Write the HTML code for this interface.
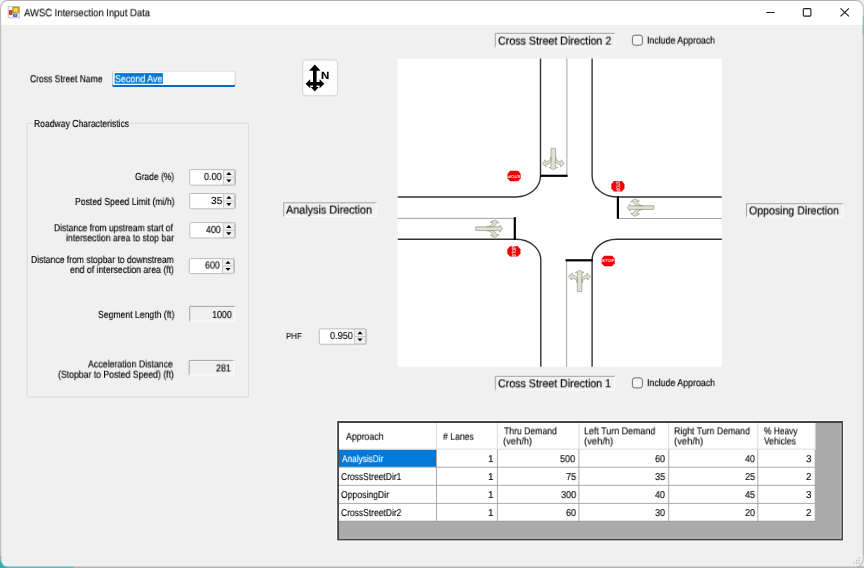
<!DOCTYPE html>
<html lang="en">
<head>
<meta charset="utf-8">
<title>AWSC Intersection Input Data</title>
<style>
html,body{margin:0;padding:0;}
body{width:864px;height:568px;overflow:hidden;position:relative;background:#ececec;font-family:"Liberation Sans",sans-serif;}
.abs{position:absolute;box-sizing:border-box;}
.t{position:absolute;white-space:pre;transform-origin:0 0;color:#000;will-change:transform;text-rendering:geometricPrecision;-webkit-text-stroke:0.15px;}
</style>
</head>
<body>
<!-- window frame -->
<svg class="abs" style="left:0;top:0" width="864" height="568" viewBox="0 0 864 568">
  <rect x="0" y="0" width="864" height="568" fill="#ececec"/>
  <rect x="0" y="556" width="3" height="12" fill="#27b4b4"/>
  <rect x="0" y="566" width="74" height="2" fill="#27b4b4"/>
  <rect x="74" y="566.3" width="790" height="1.7" fill="#b4b4b4"/>
  <rect x="862" y="16" width="2" height="19" fill="#3bbcc2"/>
  <rect x="862.6" y="35" width="1.4" height="520" fill="#c4c4c4"/>
  <clipPath id="wclip"><rect x="1.3" y="0.9" width="861.3" height="565.6" rx="7.2"/></clipPath>
  <rect x="0.75" y="0.35" width="862.4" height="566.7" rx="7.7" fill="none" stroke="#b2b2b2" stroke-width="1.1"/>
  <g clip-path="url(#wclip)">
    <rect x="0" y="0" width="864" height="568" fill="#f0f0f0"/>
    <rect x="0" y="0" width="864" height="24.9" fill="#fff"/>
  </g>
</svg>

<!-- title bar icon + window buttons -->
<svg class="abs" style="left:0;top:0" width="864" height="30" viewBox="0 0 864 30">
  <rect x="8.1" y="6.5" width="11.4" height="11.4" fill="#e9e9e9" stroke="#c2c2c2" stroke-width="0.8"/>
  <rect x="9" y="7.4" width="3.2" height="2.3" fill="#fbffff"/>
  <rect x="9" y="15.2" width="3.2" height="1.9" fill="#fbfbfb"/>
  <rect x="17.6" y="13.6" width="1.3" height="3.5" fill="#f6f6f6"/>
  <rect x="12.9" y="7.2" width="5.9" height="5.6" fill="#e3b21f" stroke="#b78e14" stroke-width="0.9"/>
  <rect x="14.1" y="8.3" width="3.5" height="3.4" fill="#ffd95a"/>
  <rect x="8.9" y="10.2" width="3.5" height="4.6" rx="0.5" fill="#b9281a"/>
  <rect x="10.1" y="11.9" width="1.1" height="1.2" fill="#f2b0a8"/>
  <rect x="13" y="13.8" width="4.3" height="3.2" rx="0.4" fill="#3b79d9"/>
  <rect x="14.2" y="14.6" width="1.9" height="1" fill="#8fb6ef"/>
  <path d="M766.2 12.5H774.6" stroke="#1f1f1f" stroke-width="1.05" fill="none"/>
  <rect x="803.3" y="8.6" width="7.6" height="7.5" rx="1" fill="none" stroke="#1f1f1f" stroke-width="1.1"/>
  <path d="M840.5 8.3L848.9 16.4M848.9 8.3L840.5 16.4" stroke="#1f1f1f" stroke-width="1.1" fill="none"/>
</svg>

<!-- static boxes drawn in SVG for sub-pixel accuracy -->
<svg class="abs" style="left:0;top:0" width="864" height="568" viewBox="0 0 864 568">
  <defs>
    <g id="spbtn">
      <!-- spinner buttons block: origin = top-left of button block, 11.2 x 15.6 -->
      <rect x="0" y="0" width="11.2" height="15.6" fill="#efefef" stroke="#c4c4c4" stroke-width="0.9"/>
      <path d="M0 7.8H11.2" stroke="#c4c4c4" stroke-width="0.9"/>
      <path d="M5.6 2.3L8.2 5.3H3Z" fill="#000"/>
      <path d="M5.6 12.9L8.2 9.9H3Z" fill="#000"/>
    </g>
  </defs>
  <!-- Cross street name textbox -->
  <rect x="112.3" y="71" width="122.8" height="15.9" rx="1.5" fill="#0a6cc5"/>
  <rect x="112.3" y="71" width="122.8" height="14" rx="1.2" fill="#e4e4e4"/>
  <rect x="113.1" y="71.8" width="121.2" height="13.2" fill="#fff"/>
  <rect x="114.7" y="73.1" width="48.2" height="10.6" fill="#0078d7"/>
  <!-- group box -->
  <rect x="27.2" y="123.3" width="221.2" height="273.8" fill="none" stroke="#dadada" stroke-width="1"/>
  <rect x="32" y="118" width="99" height="10" fill="#f0f0f0"/>
  <!-- spinners -->
  <g fill="#fff" stroke="#b9bec6" stroke-width="1">
    <rect x="189.7" y="169.6" width="45.8" height="15.6" rx="1.3"/>
    <rect x="189.7" y="193.5" width="45.8" height="15.3" rx="1.3"/>
    <rect x="189.8" y="222.6" width="45.6" height="15.4" rx="1.3"/>
    <rect x="189.3" y="258.6" width="45.2" height="15" rx="1.3"/>
    <rect x="319.3" y="328.9" width="47" height="15.3" rx="1.3"/>
  </g>
  <use href="#spbtn" transform="translate(223.3 169.9) scale(1 0.96)"/>
  <use href="#spbtn" transform="translate(223.3 193.8) scale(1 0.94)"/>
  <use href="#spbtn" transform="translate(223.2 222.9) scale(1 0.95)"/>
  <use href="#spbtn" transform="translate(222.4 258.9) scale(1 0.92)"/>
  <use href="#spbtn" transform="translate(354.4 329.2) scale(1 0.94)"/>
  <!-- sunken boxes: dark top/left, white bottom/right -->
  <g id="sunkall">
    <path d="M189.7 321.5V306.4H235.2" fill="none" stroke="#a4a4a4" stroke-width="1"/><path d="M189.7 321.0H234.7V306.4" fill="none" stroke="#fdfdfd" stroke-width="1"/>
    <path d="M189.2 375.4V360.4H234.3" fill="none" stroke="#a4a4a4" stroke-width="1"/><path d="M189.2 374.9H233.8V360.4" fill="none" stroke="#fdfdfd" stroke-width="1"/>
    <path d="M283.7 216.9V202.8H376.5" fill="none" stroke="#a4a4a4" stroke-width="1"/><path d="M283.7 216.4H376.0V202.8" fill="none" stroke="#fdfdfd" stroke-width="1"/>
    <path d="M495.3 47.4V33.3H615.3" fill="none" stroke="#a4a4a4" stroke-width="1"/><path d="M495.3 46.9H614.8V33.3" fill="none" stroke="#fdfdfd" stroke-width="1"/>
    <path d="M495.3 390.4V376.3H615.3" fill="none" stroke="#a4a4a4" stroke-width="1"/><path d="M495.3 389.9H614.8V376.3" fill="none" stroke="#fdfdfd" stroke-width="1"/>
    <path d="M746.5 217.5V203.7H843.2" fill="none" stroke="#a4a4a4" stroke-width="1"/><path d="M746.5 217.0H842.7V203.7" fill="none" stroke="#fdfdfd" stroke-width="1"/>
  </g>
  <!-- N button -->
  <rect x="302.7" y="59.9" width="34.9" height="35.9" rx="3" fill="#fdfdfd" stroke="#d2d2d2" stroke-width="1"/>
  <!-- checkboxes -->
  <rect x="632.4" y="35.2" width="10" height="10" rx="2.4" fill="#f6f6f6" stroke="#6b6b6b" stroke-width="1"/>
  <rect x="632.4" y="377.9" width="10" height="10" rx="2.4" fill="#f6f6f6" stroke="#6b6b6b" stroke-width="1"/>
</svg>

<!-- intersection picture -->
<svg class="abs" style="left:0;top:0" width="864" height="568" viewBox="0 0 864 568">
  <defs>
    <g id="arw">
      <!-- canonical arrow pointing +y (down); tail at y=0 tip at y=21.2; half-width 10.7 -->
      <path d="M-2.3 0H2.3V19.1H4.3L0 21.2L-4.3 19.1H-2.3Z
               M-2.3 8.6C-2.9 11.8 -4.8 13.3 -7.7 13.6L-8.1 11.5L-10.9 15.4L-7.2 18.5L-7.4 16.5C-4.9 16.2 -3.2 15.2 -2.3 13.2Z
               M2.3 8.6C2.9 11.8 4.8 13.3 7.7 13.6L8.1 11.5L10.9 15.4L7.2 18.5L7.4 16.5C4.9 16.2 3.2 15.2 2.3 13.2Z"
            fill="#dfe1d1" stroke="#9ea091" stroke-width="0.75" stroke-linejoin="round"/>
    </g>
    <polygon id="oct" points="-3.9,-5.2 3.9,-5.2 6.55,-2.2 6.55,2.2 3.9,5.2 -3.9,5.2 -6.55,2.2 -6.55,-2.2" fill="#f00000"/>
  </defs>
  <rect x="397.6" y="58.6" width="324.2" height="308.2" fill="#fff"/>
  <g fill="none" stroke="#333" stroke-width="1.4">
    <path d="M397.8 196.95H515.8A24.6 21 0 0 0 540.5 175.95V58.6"/>
    <path d="M592.1 58.6V175.95A24.6 21 0 0 0 616.7 196.95H721.8"/>
    <path d="M397.8 239.2H515.8A24.6 21 0 0 1 540.8 260.2V366.8"/>
    <path d="M592.1 366.8V260.2A24.6 21 0 0 1 616.7 239.2H721.8"/>
  </g>
  <g fill="none" stroke="#9a9a9a" stroke-width="0.9">
    <path d="M566.9 58.6V175.8"/>
    <path d="M566.6 260.3V366.8"/>
    <path d="M397.8 218.4H514.8"/>
    <path d="M617.9 218.5H721.8"/>
  </g>
  <g fill="none" stroke="#000" stroke-width="2.2">
    <path d="M540 175.8H567.6"/>
    <path d="M565.6 260.3H592.7"/>
    <path d="M514.8 217.2V239.9"/>
    <path d="M617.9 196.3V218.8"/>
  </g>
  <!-- lane arrows -->
  <use href="#arw" transform="translate(553.3 148.3)"/>
  <use href="#arw" transform="translate(579.6 291.6) rotate(180)"/>
  <use href="#arw" transform="translate(653.8 207.6) scale(1.25 0.8) rotate(90)"/>
  <use href="#arw" transform="translate(475.7 228.7) scale(1.265 0.81) rotate(-90)"/>
  <!-- stop signs -->
  <use href="#oct" transform="translate(514.1 176)"/>
  <use href="#oct" transform="translate(617.9 186.3)"/>
  <use href="#oct" transform="translate(513.9 251.4)"/>
  <use href="#oct" transform="translate(608.2 261)"/>
  <g font-family="Liberation Sans, sans-serif" font-weight="bold" font-size="4" fill="#fff" fill-opacity="0.92" text-anchor="middle">
    <text transform="translate(514.1 176) rotate(180) scale(1.2 1)" y="1.45">STOP</text>
    <text transform="translate(617.9 186.3) rotate(90) scale(0.95 1.25)" y="1.45">STOP</text>
    <text transform="translate(513.9 251.4) rotate(-90) scale(0.95 1.25)" y="1.45">STOP</text>
    <text transform="translate(608.2 261) scale(1.2 1)" y="1.45">STOP</text>
  </g>
  <!-- N compass icon -->
  <g fill="#000" stroke="none">
    <path d="M314.8 64.4L320.6 70.8H316.6V81.9H319.6V79.3L324.3 83.7L319.6 88.2V85.6H316.6V86.9H318.7L314.8 91.5L310.8 86.9H313V85.6H310.2V88.2L305.6 83.7L310.2 79.3V81.9H313V70.8H309Z"/>
  </g>
</svg>

<!-- data grid -->
<svg class="abs" style="left:0;top:0" width="864" height="568" viewBox="0 0 864 568">
  <rect x="336.1" y="419.9" width="508" height="121.9" fill="#fbfbfb"/>
  <rect x="337.2" y="421" width="505.8" height="119.4" fill="#454545"/>
  <rect x="339.2" y="423" width="502.4" height="115.9" fill="#b7b7b7"/>
  <rect x="339.2" y="423" width="500.9" height="114.6" fill="#ababab"/>
  <rect x="339" y="423" width="476.3" height="98" fill="#fff"/>
  <rect x="339" y="449.6" width="97.2" height="17.3" fill="#0078d7"/>
  <g stroke="#dcdcdc" stroke-width="1" fill="none">
    <path d="M436.5 423V449M497.4 423V449M578.9 423V449M668.7 423V449M757.8 423V449M815.2 423V449"/>
    <path d="M339 449.1H815.8"/>
  </g>
  <g stroke="#9c9c9c" stroke-width="0.85" fill="none">
    <path d="M436.5 449.6V521.2M497.4 449.6V521.2M578.9 449.6V521.2M668.7 449.6V521.2M757.8 449.6V521.2M815.2 449.6V521.2"/>
    <path d="M339 467.2H815.6M339 485.3H815.6M339 503.4H815.6M339 521.2H815.6"/>
  </g>
</svg>

<!-- size grip -->
<svg class="abs" style="left:850px;top:554px" width="12" height="12" viewBox="0 0 12 12">
  <g fill="#bdbdbd"><rect x="8.6" y="3.2" width="1.4" height="1.4"/><rect x="6" y="5.8" width="1.4" height="1.4"/><rect x="8.6" y="5.8" width="1.4" height="1.4"/><rect x="3.4" y="8.4" width="1.4" height="1.4"/><rect x="6" y="8.4" width="1.4" height="1.4"/><rect x="8.6" y="8.4" width="1.4" height="1.4"/></g>
</svg>

<span class="t" id="t0" style="left:24.21px;top:7px;font-size:10.6px;line-height:13px;-webkit-text-stroke:0.1px;transform:translate(0,0.30px) scaleX(0.8943);">AWSC Intersection Input Data</span>
<span class="t" id="t1" style="left:29.84px;top:73px;font-size:10.2px;line-height:13px;transform:translate(0,0.20px) scaleX(0.8368);">Cross Street Name</span>
<span class="t" id="t2" style="left:115.11px;top:73px;font-size:10.2px;line-height:13px;color:#fff;transform:translate(0,0.20px) scaleX(0.8747);">Second Ave</span>
<span class="t" id="t3" style="left:34.02px;top:118px;font-size:10.2px;line-height:13px;transform:translate(0,0.00px) scaleX(0.8437);">Roadway Characteristics</span>
<span class="t" id="t4" style="left:134.93px;top:171px;font-size:10.2px;line-height:13px;transform:translate(0,0.00px) scaleX(0.8335);">Grade (%)</span>
<span class="t" id="t5" style="left:74.52px;top:196px;font-size:10.2px;line-height:13px;transform:translate(0,0.00px) scaleX(0.8492);">Posted Speed Limit (mi/h)</span>
<span class="t" id="t6" style="left:54.03px;top:222px;font-size:10.2px;line-height:13px;transform:translate(0,0.20px) scaleX(0.8371);">Distance from upstream start of</span>
<span class="t" id="t7" style="left:65.50px;top:232px;font-size:10.2px;line-height:13px;transform:translate(0,0.20px) scaleX(0.8548);">intersection area to stop bar</span>
<span class="t" id="t8" style="left:30.62px;top:254px;font-size:10.2px;line-height:13px;transform:translate(0,0.00px) scaleX(0.8431);">Distance from stopbar to downstream</span>
<span class="t" id="t9" style="left:70.32px;top:264px;font-size:10.2px;line-height:13px;transform:translate(0,0.00px) scaleX(0.8536);">end of intersection area (ft)</span>
<span class="t" id="t10" style="left:97.53px;top:308px;font-size:10.2px;line-height:13px;transform:translate(0,0.90px) scaleX(0.8483);">Segment Length (ft)</span>
<span class="t" id="t11" style="left:87.79px;top:358px;font-size:10.2px;line-height:13px;transform:translate(0,0.40px) scaleX(0.8623);">Acceleration Distance</span>
<span class="t" id="t12" style="left:57.60px;top:368px;font-size:10.2px;line-height:13px;transform:translate(0,0.80px) scaleX(0.8524);">(Stopbar to Posted Speed) (ft)</span>
<span class="t" id="t13" style="left:204.09px;top:171px;font-size:10.2px;line-height:13px;transform:translate(0,0.00px) scaleX(0.8866);">0.00</span>
<span class="t" id="t14" style="left:210.56px;top:195px;font-size:10.2px;line-height:13px;transform:translate(0,0.00px) scaleX(0.9859);">35</span>
<span class="t" id="t15" style="left:206.32px;top:223px;font-size:10.2px;line-height:13px;transform:translate(0,0.90px) scaleX(0.8646);">400</span>
<span class="t" id="t16" style="left:205.39px;top:259px;font-size:10.2px;line-height:13px;transform:translate(0,0.50px) scaleX(0.8726);">600</span>
<span class="t" id="t17" style="left:212.49px;top:309px;font-size:10.2px;line-height:13px;transform:translate(0,0.00px) scaleX(0.8756);">1000</span>
<span class="t" id="t18" style="left:216.27px;top:362px;font-size:10.2px;line-height:13px;transform:translate(0,0.50px) scaleX(0.8726);">281</span>
<span class="t" id="t19" style="left:286.17px;top:203px;font-size:11.5px;line-height:14px;transform:translate(0,0.60px) scaleX(0.9412);">Analysis Direction</span>
<span class="t" id="t20" style="left:286.02px;top:331px;font-size:8.8px;line-height:11px;-webkit-text-stroke:0.05px;transform:translate(0,0.00px) scaleX(0.8985);">PHF</span>
<span class="t" id="t21" style="left:330.09px;top:330px;font-size:10.2px;line-height:13px;transform:translate(0,0.00px) scaleX(0.8963);">0.950</span>
<span class="t" id="t22" style="left:321.34px;top:70px;font-size:10.3px;line-height:13px;font-weight:bold;transform:translate(0,0.40px) scaleX(1.1157);">N</span>
<span class="t" id="t23" style="left:497.84px;top:34px;font-size:11.5px;line-height:14px;transform:translate(0,0.60px) scaleX(0.9277);">Cross Street Direction 2</span>
<span class="t" id="t24" style="left:647.42px;top:34px;font-size:10.2px;line-height:13px;transform:translate(0,0.60px) scaleX(0.8639);">Include Approach</span>
<span class="t" id="t25" style="left:497.84px;top:377px;font-size:11.5px;line-height:14px;transform:translate(0,0.30px) scaleX(0.9254);">Cross Street Direction 1</span>
<span class="t" id="t26" style="left:647.42px;top:377px;font-size:10.2px;line-height:13px;transform:translate(0,0.10px) scaleX(0.8639);">Include Approach</span>
<span class="t" id="t27" style="left:748.87px;top:204px;font-size:11.5px;line-height:14px;transform:translate(0,0.40px) scaleX(0.9191);">Opposing Direction</span>
<span class="t" id="t28" style="left:345.59px;top:431px;font-size:10.0px;line-height:12px;-webkit-text-stroke:0.12px;transform:translate(0,0.80px) scaleX(0.8751);">Approach</span>
<span class="t" id="t29" style="left:442.50px;top:431px;font-size:10.0px;line-height:12px;-webkit-text-stroke:0.12px;transform:translate(0,0.80px) scaleX(0.8653);"># Lanes</span>
<span class="t" id="t30" style="left:503.71px;top:426px;font-size:10.0px;line-height:12px;-webkit-text-stroke:0.12px;transform:translate(0,0.30px) scaleX(0.8640);">Thru Demand</span>
<span class="t" id="t31" style="left:503.36px;top:436px;font-size:10.0px;line-height:12px;-webkit-text-stroke:0.12px;transform:translate(0,0.40px) scaleX(0.9358);">(veh/h)</span>
<span class="t" id="t32" style="left:584.07px;top:426px;font-size:10.0px;line-height:12px;-webkit-text-stroke:0.12px;transform:translate(0,0.30px) scaleX(0.8907);">Left Turn Demand</span>
<span class="t" id="t33" style="left:584.26px;top:436px;font-size:10.0px;line-height:12px;-webkit-text-stroke:0.12px;transform:translate(0,0.40px) scaleX(0.9391);">(veh/h)</span>
<span class="t" id="t34" style="left:673.69px;top:426px;font-size:10.0px;line-height:12px;-webkit-text-stroke:0.12px;transform:translate(0,0.30px) scaleX(0.8753);">Right Turn Demand</span>
<span class="t" id="t35" style="left:673.86px;top:436px;font-size:10.0px;line-height:12px;-webkit-text-stroke:0.12px;transform:translate(0,0.40px) scaleX(0.9391);">(veh/h)</span>
<span class="t" id="t36" style="left:764.18px;top:426px;font-size:10.0px;line-height:12px;-webkit-text-stroke:0.12px;transform:translate(0,0.30px) scaleX(0.8360);">% Heavy</span>
<span class="t" id="t37" style="left:764.15px;top:436px;font-size:10.0px;line-height:12px;-webkit-text-stroke:0.12px;transform:translate(0,0.40px) scaleX(0.8555);">Vehicles</span>
<span class="t" id="t38" style="left:341.70px;top:454px;font-size:10.0px;line-height:12px;-webkit-text-stroke:0.12px;color:#fff;transform:translate(0,0.10px) scaleX(0.8264);">AnalysisDir</span>
<span class="t" id="t39" style="left:488.40px;top:454px;font-size:10.0px;line-height:12px;-webkit-text-stroke:0.12px;transform:translate(0,0.10px) scaleX(0.9880);">1</span>
<span class="t" id="t40" style="left:560.47px;top:454px;font-size:10.0px;line-height:12px;-webkit-text-stroke:0.12px;transform:translate(0,0.10px) scaleX(0.9169);">500</span>
<span class="t" id="t41" style="left:654.75px;top:454px;font-size:10.0px;line-height:12px;-webkit-text-stroke:0.12px;transform:translate(0,0.10px) scaleX(0.9070);">60</span>
<span class="t" id="t42" style="left:744.92px;top:454px;font-size:10.0px;line-height:12px;-webkit-text-stroke:0.12px;transform:translate(0,0.10px) scaleX(0.8911);">40</span>
<span class="t" id="t43" style="left:806.38px;top:454px;font-size:10.0px;line-height:12px;-webkit-text-stroke:0.12px;transform:translate(0,0.10px) scaleX(0.9845);">3</span>
<span class="t" id="t44" style="left:340.93px;top:472px;font-size:10.0px;line-height:12px;-webkit-text-stroke:0.12px;transform:translate(0,0.00px) scaleX(0.8480);">CrossStreetDir1</span>
<span class="t" id="t45" style="left:488.40px;top:472px;font-size:10.0px;line-height:12px;-webkit-text-stroke:0.12px;transform:translate(0,0.00px) scaleX(0.9880);">1</span>
<span class="t" id="t46" style="left:565.50px;top:472px;font-size:10.0px;line-height:12px;-webkit-text-stroke:0.12px;transform:translate(0,0.00px) scaleX(0.9235);">75</span>
<span class="t" id="t47" style="left:654.66px;top:472px;font-size:10.0px;line-height:12px;-webkit-text-stroke:0.12px;transform:translate(0,0.00px) scaleX(0.9280);">35</span>
<span class="t" id="t48" style="left:744.73px;top:472px;font-size:10.0px;line-height:12px;-webkit-text-stroke:0.12px;transform:translate(0,0.00px) scaleX(0.9210);">25</span>
<span class="t" id="t49" style="left:806.46px;top:472px;font-size:10.0px;line-height:12px;-webkit-text-stroke:0.12px;transform:translate(0,0.00px) scaleX(0.9594);">2</span>
<span class="t" id="t50" style="left:340.95px;top:490px;font-size:10.0px;line-height:12px;-webkit-text-stroke:0.12px;transform:translate(0,0.00px) scaleX(0.8633);">OpposingDir</span>
<span class="t" id="t51" style="left:488.40px;top:490px;font-size:10.0px;line-height:12px;-webkit-text-stroke:0.12px;transform:translate(0,0.00px) scaleX(0.9880);">1</span>
<span class="t" id="t52" style="left:560.51px;top:490px;font-size:10.0px;line-height:12px;-webkit-text-stroke:0.12px;transform:translate(0,0.00px) scaleX(0.9143);">300</span>
<span class="t" id="t53" style="left:654.92px;top:490px;font-size:10.0px;line-height:12px;-webkit-text-stroke:0.12px;transform:translate(0,0.00px) scaleX(0.8911);">40</span>
<span class="t" id="t54" style="left:744.92px;top:490px;font-size:10.0px;line-height:12px;-webkit-text-stroke:0.12px;transform:translate(0,0.00px) scaleX(0.9035);">45</span>
<span class="t" id="t55" style="left:806.38px;top:490px;font-size:10.0px;line-height:12px;-webkit-text-stroke:0.12px;transform:translate(0,0.00px) scaleX(0.9845);">3</span>
<span class="t" id="t56" style="left:340.92px;top:508px;font-size:10.0px;line-height:12px;-webkit-text-stroke:0.12px;transform:translate(0,0.00px) scaleX(0.8492);">CrossStreetDir2</span>
<span class="t" id="t57" style="left:488.40px;top:508px;font-size:10.0px;line-height:12px;-webkit-text-stroke:0.12px;transform:translate(0,0.00px) scaleX(0.9880);">1</span>
<span class="t" id="t58" style="left:565.55px;top:508px;font-size:10.0px;line-height:12px;-webkit-text-stroke:0.12px;transform:translate(0,0.00px) scaleX(0.9070);">60</span>
<span class="t" id="t59" style="left:654.66px;top:508px;font-size:10.0px;line-height:12px;-webkit-text-stroke:0.12px;transform:translate(0,0.00px) scaleX(0.9149);">30</span>
<span class="t" id="t60" style="left:744.74px;top:508px;font-size:10.0px;line-height:12px;-webkit-text-stroke:0.12px;transform:translate(0,0.00px) scaleX(0.9081);">20</span>
<span class="t" id="t61" style="left:806.46px;top:508px;font-size:10.0px;line-height:12px;-webkit-text-stroke:0.12px;transform:translate(0,0.00px) scaleX(0.9594);">2</span>
</body>
</html>
